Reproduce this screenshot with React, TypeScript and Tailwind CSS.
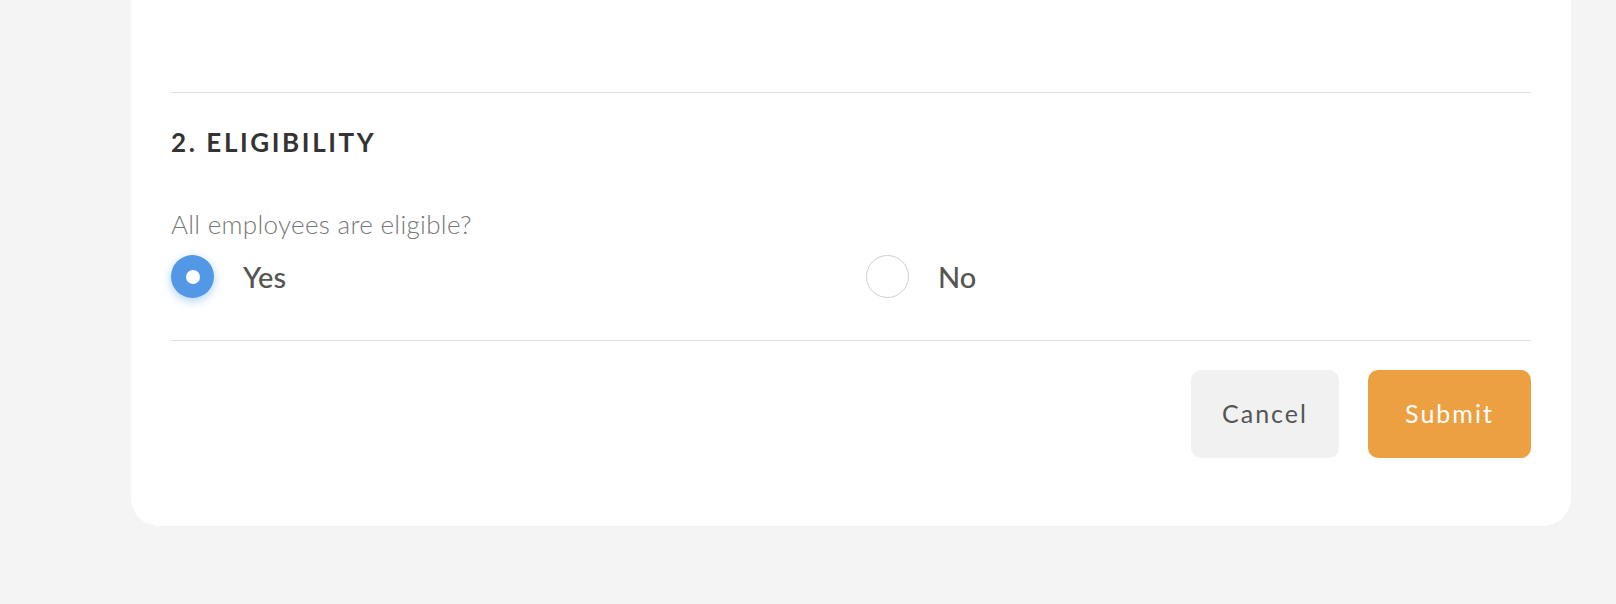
import React, { useState } from 'react';

const font = { fontFamily: 'Lato, "Noto Sans", sans-serif' };

function Radio({ label, checked, onSelect }: { label: string; checked: boolean; onSelect: () => void }) {
  return (
    <button type="button" onClick={onSelect} className="flex items-center gap-[29px] h-[43px] text-left">
      {checked ? (
        <span className="w-[43px] h-[43px] rounded-full bg-[#5398e6] flex items-center justify-center shadow-[0_3px_10px_rgba(83,152,230,0.45)]">
          <span className="w-[14px] h-[14px] rounded-full bg-white" />
        </span>
      ) : (
        <span className="w-[43px] h-[43px] rounded-full border border-[#cfcfcf] bg-white" />
      )}
      <span className="text-[29px] leading-none font-medium text-[#555555]">{label}</span>
    </button>
  );
}

export default function App() {
  const [eligible, setEligible] = useState(true);

  return (
    <div className="min-h-[604px] bg-[#f4f4f4] pl-[131px] pr-[45px]" style={font}>
      <div className="w-[1440px] bg-white rounded-b-[28px] px-[40px] pt-[92px] pb-[68px]">
        <div className="border-t border-[#dddddd]" />

        <h2 className="mt-[36px] text-[26px] leading-none font-bold tracking-[0.1em] text-[#333333]">
          2. ELIGIBILITY
        </h2>

        <p className="mt-[56px] h-[26px] text-[26px] leading-none font-light tracking-[0.012em] text-[#777777]">
          All employees are eligible?
        </p>

        <div className="mt-[18px] grid grid-cols-2 gap-[30px]">
          <Radio label="Yes" checked={eligible} onSelect={() => setEligible(true)} />
          <Radio label="No" checked={!eligible} onSelect={() => setEligible(false)} />
        </div>

        <div className="mt-[42px] border-t border-[#dddddd]" />

        <div className="mt-[29px] flex justify-end gap-[29px]">
          <button className="w-[148px] h-[88px] rounded-[10px] bg-[#f1f1f1] text-[25px] tracking-[0.08em] text-[#555555]">
            Cancel
          </button>
          <button className="w-[163px] h-[88px] rounded-[10px] bg-[#eca042] text-[25px] tracking-[0.08em] text-white">
            Submit
          </button>
        </div>
      </div>
    </div>
  );
}
